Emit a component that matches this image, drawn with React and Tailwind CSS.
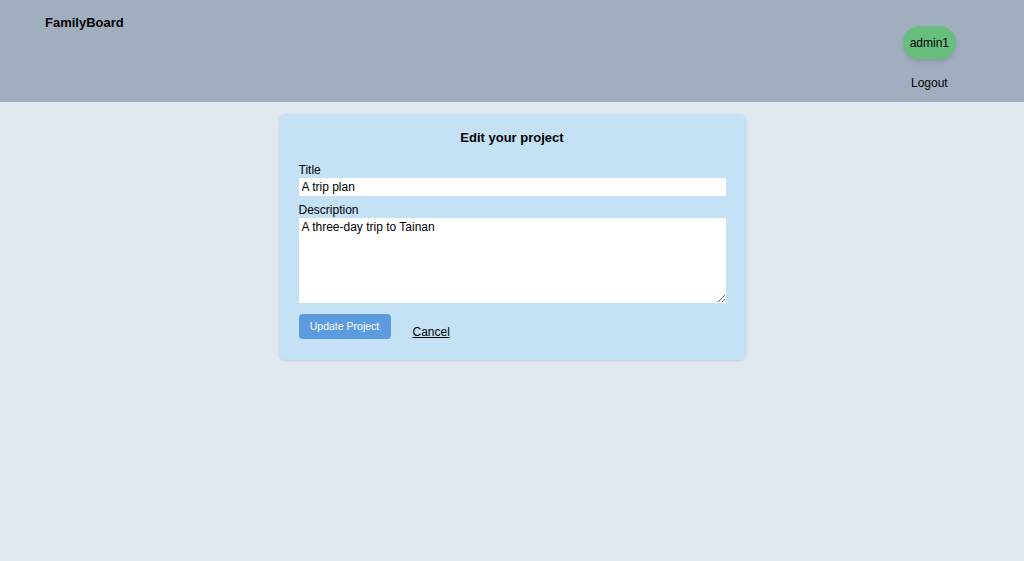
import React from "react";

export default function App() {
  return (
    <div className="min-h-screen bg-[#e2e8f0] font-['Liberation_Sans',Arial,sans-serif] text-black">
      <header className="flex h-[102px] justify-between bg-[#a0aec0] pl-[45px] pr-[68px]">
        <div className="pt-[13px] text-[13px] font-bold">FamilyBoard</div>
        <div className="flex flex-col items-center pt-[26px]">
          <div className="flex h-[33px] items-center rounded-full bg-[#68bf7d] px-[7px] text-[12px] shadow-md">
            admin1
          </div>
          <button className="mt-[17px] text-[12px] leading-[14px]">Logout</button>
        </div>
      </header>

      <main className="flex justify-center pt-[12px]">
        <div className="w-[467px] rounded-md bg-[#c4e1f5] px-[20px] pb-[21px] pt-[16px] shadow-sm">
          <h2 className="text-center text-[13px] font-bold leading-[16px]">Edit your project</h2>
          <div className="mt-[17px] flex flex-col">
            <label className="text-[12px] leading-[15px]">Title</label>
            <input
              defaultValue="A trip plan"
              className="h-[18px] w-full bg-white px-[3px] text-[12px] outline-none"
            />
            <label className="mt-[7px] text-[12px] leading-[15px]">Description</label>
            <textarea
              defaultValue="A three-day trip to Tainan"
              className="block h-[85px] w-full resize-y bg-white px-[3px] py-[2px] text-[12px] leading-[15px] outline-none"
            />
          </div>
          <div className="mt-[11px] flex items-end gap-[22px]">
            <button className="h-[25px] w-[92px] rounded bg-[#5b9bdf] text-[10.5px] text-white">
              Update Project
            </button>
            <a className="text-[12px] underline leading-[14px]">Cancel</a>
          </div>
        </div>
      </main>
    </div>
  );
}
